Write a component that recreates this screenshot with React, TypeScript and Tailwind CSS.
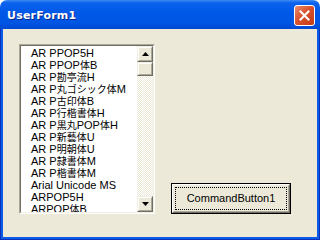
import React from 'react';

const fonts = [
  'AR PPOP5H',
  'AR PPOP体B',
  'AR P勘亭流H',
  'AR P丸ゴシック体M',
  'AR P古印体B',
  'AR P行楷書体H',
  'AR P黒丸POP体H',
  'AR P新藝体U',
  'AR P明朝体U',
  'AR P隷書体M',
  'AR P楷書体M',
  'Arial Unicode MS',
  'ARPOP5H',
  'ARPOP体B',
];

// japanese glyphs are drawn a bit smaller than the latin ones in the reference
const FontName = ({ name }: { name: string }) => {
  const parts = name.split(/([\u3000-\u9fff]+)/).filter(Boolean);
  return (
    <div className="h-[12px] whitespace-nowrap">
      {parts.map((p, i) =>
        /[\u3000-\u9fff]/.test(p) ? (
          <span key={i} className="text-[10px]">{p}</span>
        ) : (
          <span key={i}>{p}</span>
        )
      )}
    </div>
  );
};

// classic raised 3D box used by scroll buttons and the thumb
const Raised = ({ className, children }: { className?: string; children?: React.ReactNode }) => (
  <div className={`border border-t-[#f1efe2] border-l-[#f1efe2] border-b-[#716f64] border-r-[#716f64] ${className ?? ''}`}>
    <div className="flex h-full w-full items-center justify-center border border-t-white border-l-white border-b-[#aca899] border-r-[#aca899] bg-[#ece9d8]">
      {children}
    </div>
  </div>
);

const Arrow = ({ down }: { down?: boolean }) => (
  <svg width="7" height="4" viewBox="0 0 7 4" className={down ? 'rotate-180' : ''}>
    <path d="M3.5 0 L7 4 L0 4 Z" fill="#000" />
  </svg>
);

export default function App() {
  return (
    <div className="h-[240px] w-[320px] bg-white">
      <div className="flex h-full flex-col">
        {/* title bar */}
        <div className="flex h-[29px] shrink-0 items-start rounded-t-[7px] bg-[linear-gradient(#3d8bf4_0%,#0a62ec_10%,#0058e8_45%,#0055e3_80%,#0048d2_100%)] pl-[7px] pr-[5px] pt-[5px]">
          <div className="mt-[4px] flex-1 font-['DejaVu_Sans',sans-serif] text-[11px] font-bold leading-[14px] tracking-[0.2px] text-white [text-shadow:1px_1px_#0b2a8c]">
            UserForm1
          </div>
          <div className="flex h-[21px] w-[21px] items-center justify-center rounded-[3px] border border-white bg-[linear-gradient(135deg,#ea8b6c_0%,#d9532e_45%,#c23a16_100%)]">
            <svg width="11" height="11" viewBox="0 0 11 11">
              <path d="M1.5 1.5 L9.5 9.5 M9.5 1.5 L1.5 9.5" stroke="#fff" strokeWidth="2" strokeLinecap="square" />
            </svg>
          </div>
        </div>

        {/* frame + client area */}
        <div className="flex-1 border-x border-b border-[#0831b8]">
          <div className="h-full border-x-2 border-b-2 border-[#0b5ae8]">
            <div className="flex h-full items-end gap-[16px] bg-[#ece9d8] pb-[23px] pl-[16px] pt-[15px]">
              {/* list box */}
              <div className="h-[170px] w-[136px] border border-t-[#aca899] border-l-[#aca899] border-b-white border-r-white">
                <div className="flex h-full border border-t-[#716f64] border-l-[#716f64] border-b-[#f1efe2] border-r-[#f1efe2] bg-white">
                  <div className="flex-1 overflow-hidden pl-[10px] pt-[1px] font-['Liberation_Sans','Noto_Sans_CJK_JP',sans-serif] text-[11px] leading-[12px] text-black">
                    {fonts.map((f) => (
                      <FontName key={f} name={f} />
                    ))}
                  </div>
                  <div className="flex w-[16px] flex-col">
                    <Raised className="h-[16px] shrink-0">
                      <Arrow />
                    </Raised>
                    <Raised className="h-[14px] shrink-0" />
                    <div className="flex-1 bg-[repeating-conic-gradient(#ffffff_0_25%,#ece9d8_0_50%)] bg-[length:2px_2px]" />
                    <Raised className="h-[16px] shrink-0">
                      <Arrow down />
                    </Raised>
                  </div>
                </div>
              </div>

              {/* command button */}
              <div className="h-[31px] w-[120px] border border-black">
                <div className="h-full border border-t-white border-l-white border-b-[#716f64] border-r-[#716f64]">
                  <div className="h-full border border-t-[#ece9d8] border-l-[#ece9d8] border-b-[#aca899] border-r-[#aca899] bg-[#ece9d8] p-px">
                    <div className="flex h-full items-center justify-center border border-dotted border-black font-['Liberation_Sans',sans-serif] text-[11px] text-black">
                      CommandButton1
                    </div>
                  </div>
                </div>
              </div>
            </div>
          </div>
        </div>
      </div>
    </div>
  );
}
